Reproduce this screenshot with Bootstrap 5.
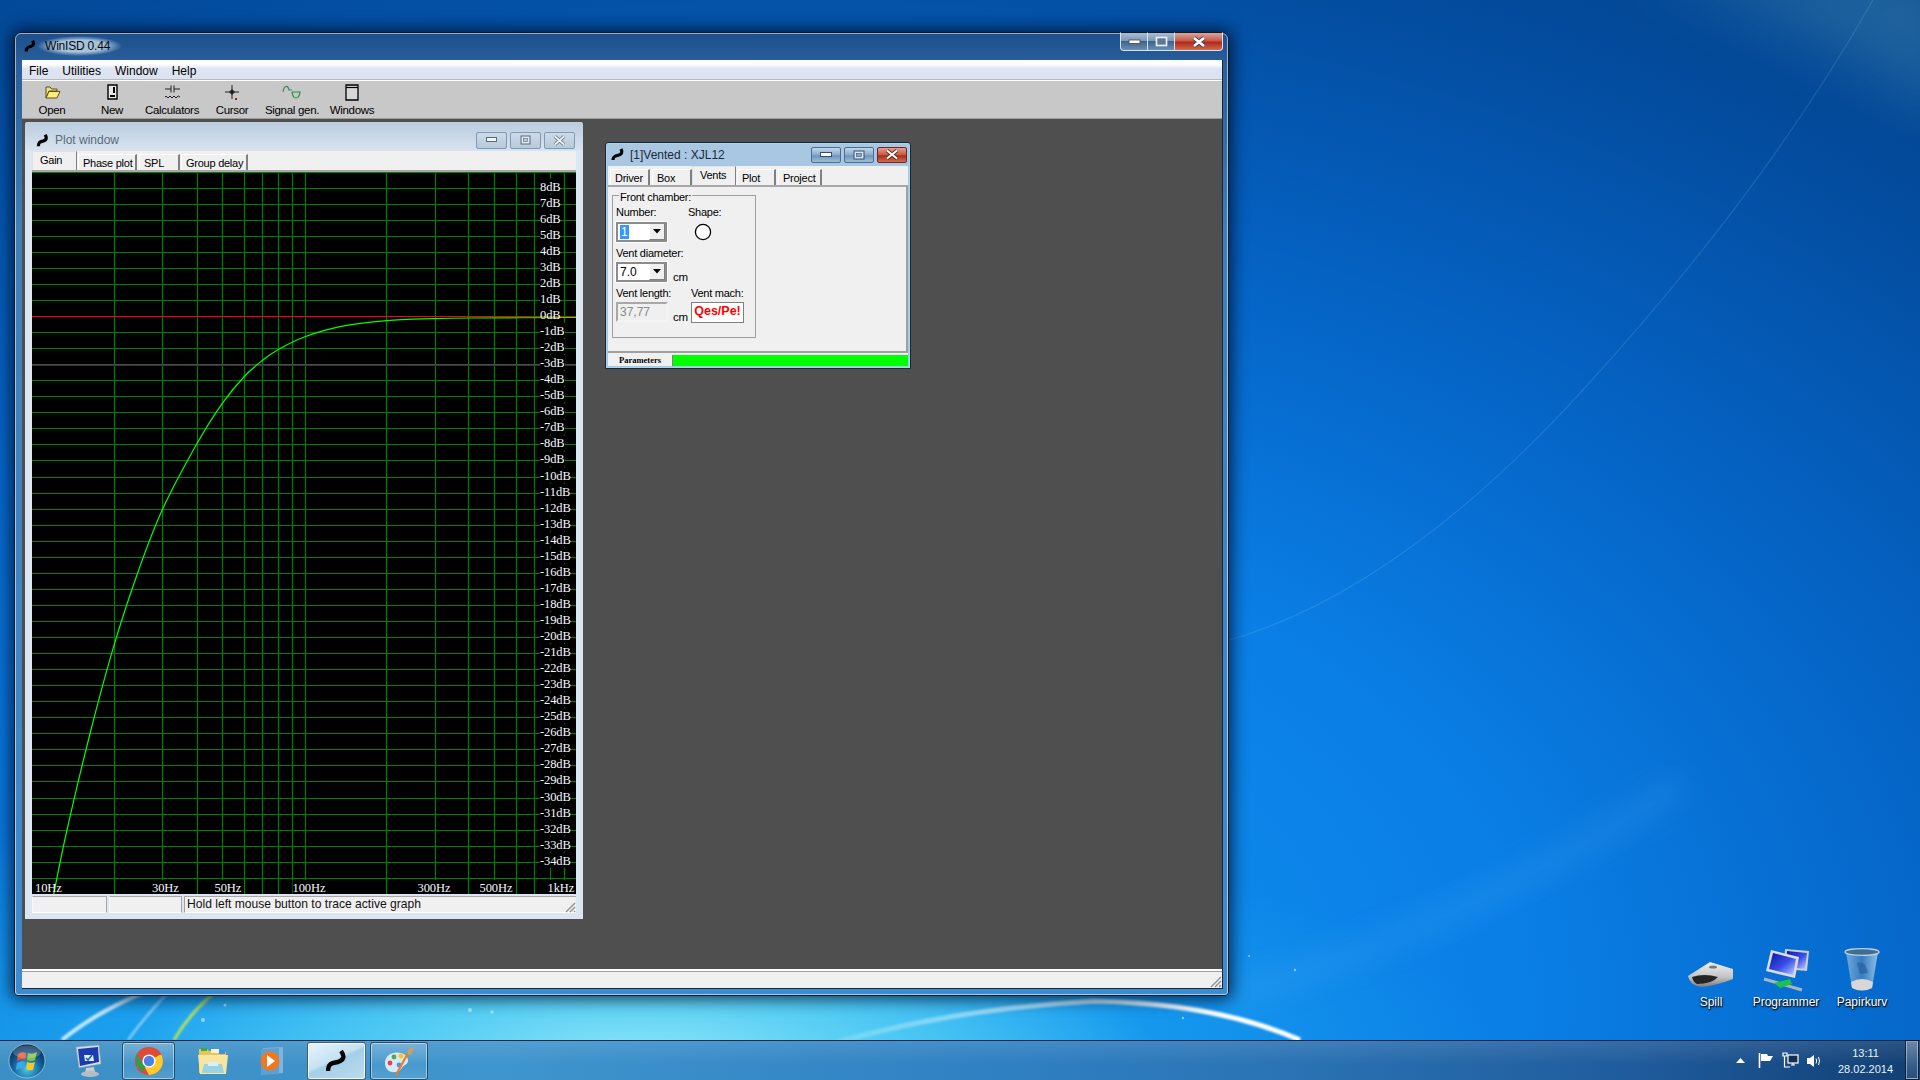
<!DOCTYPE html>
<html lang="en">
  <head>
    <meta charset="UTF-8" />
    <title>WinISD 0.44</title>
    <link rel="stylesheet" href="https://cdn.jsdelivr.net/npm/bootstrap@5.3.2/dist/css/bootstrap.min.css" />
    <style>
      html, body { margin: 0; height: 100%; overflow: hidden; }
      body {
        width: 1920px; height: 1080px; position: relative;
        font-family: "Liberation Sans", Arial, sans-serif; font-size: 12px; line-height: 14px; color: #000;
        background:
          radial-gradient(ellipse 520px 150px at 640px 1060px, #8fe6f8 0, #55cdf4 45%, rgba(60,190,240,0) 100%),
          radial-gradient(ellipse 1000px 260px at 500px 1060px, #25b3f2 0, rgba(30,170,240,0) 100%),
          radial-gradient(ellipse 1900px 1250px at 800px 1000px, #1193f0 0, #0a7fe6 38%, #0564c6 62%, #034a9b 88%, #04468f 100%);
      }
      .wallpaper { left: 0; top: 0; }

      /* main window */
      .win-main {
        left: 14px; top: 32px; width: 1215px; height: 964px; padding: 27px 5px 6px 7px;
        border: 1px solid #0c1a2a; border-radius: 7px 7px 4px 4px;
        outline: 1px solid rgba(255,255,255,.55); outline-offset: -2px;
        box-shadow: 0 0 16px 3px rgba(0,10,30,.75);
        background: linear-gradient(#1c4f8c 0, #2a5f9b 30px, #3f7fb8 200px, #3e8cd0 100%);
      }
      .main-title { left: 9px; top: 3px; height: 20px; }
      .main-title span { font-size: 12px; letter-spacing: -.2px; color: #06090c; padding: 3px 12px 3px 8px; margin-left: -8px; background: radial-gradient(ellipse closest-side, rgba(225,238,250,.7) 60%, rgba(225,238,250,0) 100%); }
      .caps-main { right: 5px; top: -1px; height: 19px; }
      .caps-main div { height: 19px; border: 1px solid #d8e2ec; border-top-color: #0c1a2a; display: flex; align-items: center; justify-content: center; }
      .caps-main .c-min { width: 28px; border-radius: 0 0 0 4px; background: linear-gradient(#a8bdd2, #7d99b6 45%, #3c6490 50%, #6c8fb2); }
      .caps-main .c-max { width: 27px; border-left: 0; background: linear-gradient(#a8bdd2, #7d99b6 45%, #3c6490 50%, #6c8fb2); }
      .caps-main .c-close { width: 48px; border-left: 0; border-radius: 0 0 4px 0; background: linear-gradient(#d9a79c, #c9594a 45%, #b02a18 55%, #d06a50); }
      .client { background: #4f4f4f; height: 100%; border: 1px solid #16283a; border-top: 0; border-left: 0; }
      .menu-bar { height: 20px; padding: 2px 0 0 7px; background: linear-gradient(#fff 0, #fbfcfe 25%, #dfe4f3 45%, #dde2f1 100%); border-bottom: 1px solid #b8b8c0; gap: 14px; }
      .menu-bar span { font-size: 12px; }
      .tool-bar { height: 39px; background: #c8c8c8; border-top: 1px solid #fff; border-bottom: 1px solid #9c9c9c; padding-left: 0; }
      .tool { width: 60px; padding-top: 3px; font-size: 11.5px; letter-spacing: -.3px; }
      .tool svg { height: 17px; width: 22px; display: block; }
      .tool span { margin-top: 2px; line-height: 14px; }
      .mdi { position: relative; flex: 1 1 auto; }
      .main-status { height: 19px; background: #f0f0f0; border-top: 1px solid #fff; box-shadow: inset 0 1px 0 #fff, inset 0 2px 0 #a0a0a0; position: relative; }
      .grip { right: 0; bottom: 0; }

      /* child windows */
      .win-plot { left: 3px; top: 3px; width: 558px; height: 797px; background: #dbe6f2; border-radius: 3px 3px 0 0; padding: 0 7px 7px; }
      .plot-title { height: 29px; margin: 0 -7px; padding: 7px 0 0 11px; background: linear-gradient(#b9cddf, #d8e3ef); border-radius: 3px 3px 0 0; }
      .plot-title .name { color: #5b6b7a; font-size: 12px; margin-left: 5px; }
      .cap { height: 17px; border: 1px solid #8299b3; border-radius: 2px; display: flex; align-items: center; justify-content: center; background: linear-gradient(#cddbe9, #b6c9dc); }
      .plot-caps { gap: 3px; margin-right: 8px; }
      .plot-caps .cap { width: 31px; }
      .page-tabs { background: #f0f0f0; height: 21px; border-bottom: 2px solid #a8a8a8; flex-wrap: nowrap; padding: 0; }
      .page-tabs .nav-link {
        border: 0; border-radius: 0; padding: 0 0 0 4px; height: 16px; margin-top: 3px; color: #000;
        font-size: 11px; letter-spacing: -.25px; line-height: 17px; text-align: left; white-space: nowrap;
        background: #f0f0f0; border-top: 1px solid #fff; border-left: 1px solid #fff; border-right: 2px solid #808080;
      }
      .page-tabs .nav-link.active { height: 19px; margin-top: 0; padding-left: 7px; line-height: 16px; border-right: 1px solid #808080; background: #f0f0f0; color: #000; }
      .plot-box { height: 722px; background: #000; display: block; }
      .plot-box text { font-family: "Liberation Serif", "Times New Roman", serif; font-size: 12.5px; fill: #f4f8ff; letter-spacing: -.1px; }
      .plot-status { height: 17px; margin-top: 2px; gap: 2px; position: relative; }
      .plot-status div { background: #f0f0f0; border-top: 1px solid #a8a8a8; border-left: 1px solid #f8f8f8; border-right: 1px solid #a8a8a8; border-bottom: 1px solid #fff; }
      .plot-status .p3 { flex: 1 1 auto; padding-left: 2px; border-left: 1px solid #a0a0a0; border-right: 0; line-height: 15px; font-size: 12.1px; color: #111; white-space: nowrap; }

      .win-vent { left: 583px; top: 23px; width: 306px; height: 227px; background: #a9c7e3; border: 1px solid #1a2836; border-radius: 3px 3px 0 0; padding: 0 2px 2px; box-shadow: inset 0 0 0 1px #9fd8ef; }
      .vent-title { height: 23px; margin: 0 -2px; padding-left: 4px; }
      .vent-title .name { font-size: 12px; margin-left: 3px; color: #1a2a3a; }
      .vent-caps { gap: 3px; margin-right: 3px; }
      .vent-caps .cap { height: 16px; width: 30px; border-color: #4a6d92; background: linear-gradient(#c3d6e8, #88aacb 50%, #6e95bc 55%, #a0bcd8); }
      .vent-caps .cap.shut { width: 30px; border-color: #6e2a20; background: linear-gradient(#e0a090, #c8553e 50%, #a92c18 55%, #cf6d55); }
      .vent-body { background: #f0f0f0; height: 200px; }
      .vent-tabs { padding-left: 2px; height: 21px; }
      .vent-page { height: 166px; border-right: 2px solid #a0a0a0; border-bottom: 2px solid #a0a0a0; padding: 8px 0 0 4px; }
      .group-box { width: 144px; height: 143px; border: 1px solid #a0a0a0; position: relative; padding: 9px 3px 0 3px; font-size: 11px; letter-spacing: -.25px; }
      .group-box .legend { top: -4px; left: 6px; background: #f0f0f0; padding: 0 1px; line-height: 11px; }
      .form-line { display: flex; height: 14px; margin-top: 4px; }
      .form-line.first { margin-top: 0; }
      .ctrl-line { display: flex; align-items: center; height: 20px; margin-top: 3px; }
      .ctrl-line.tight { margin-top: 2px; }
      .combo { width: 51px; height: 20px; background: #fff; border: 2px solid #8c8c8c; outline: 1px solid #fff; }
      .combo .val { flex: 1 1 auto; padding-left: 2px; font-size: 12px; line-height: 16px; letter-spacing: 0; }
      .combo .sel { background: #3399ff; color: #fff; padding: 0 1px; display: inline-block; height: 14px; line-height: 14px; margin-top: 1px; }
      .combo .arr { width: 16px; background: #f0f0f0; border-left: 1px solid #fff; border-right: 1px solid #808080; border-bottom: 1px solid #808080; display: flex; align-items: center; justify-content: center; }
      .unit { font-size: 11.5px; align-self: flex-end; margin-bottom: -2px; }
      .length-box { width: 52px; height: 20px; border: 2px solid #a8a8a8; border-bottom-color: #f4f4f4; border-right-color: #f4f4f4; background: #f0f0f0; color: #8a8a8a; font-size: 12px; line-height: 16px; padding-left: 2px; letter-spacing: 0; }
      .mach { width: 53px; height: 21px; background: #fff; border: 1px solid #808080; color: #ff0000; font-weight: 700; font-size: 12.5px; letter-spacing: 0; line-height: 17px; text-align: center; align-self: flex-start; }
      .vent-bottom { height: 11px; margin-top: 2px; }
      .vent-bottom .par { width: 65px; background: #f0f0f0; border-right: 1px solid #808080; font-family: "Liberation Serif", serif; font-weight: 700; font-size: 8.5px; line-height: 11px; text-align: center; }
      .vent-bottom .bar { background: #00ff00; }

      /* desktop icons */
      .desk { width: 84px; top: 945px; height: 66px; }
      .desk .pic { height: 47px; margin-bottom: 2px; }
      .desk .label { color: #fff; font-size: 12px; line-height: 16px; text-shadow: 0 1px 2px #000, 1px 1px 1px rgba(0,0,0,.8); }

      /* taskbar */
      .taskbar {
        left: 0; top: 1040px; width: 1920px; height: 40px; border-top: 1px solid #0e2a48;
        background:
          linear-gradient(rgba(255,255,255,.1), rgba(255,255,255,0) 60%),
          linear-gradient(90deg, #3c8fc4 0, #3f95cd 500px, #2f80c2 1000px, #2a72b3 1300px, #1f5b9c 1640px, #123f73 1920px);
      }
      .tb-slot { height: 39px; display: flex; align-items: center; justify-content: center; flex: none; }
      .tb-btn { height: 38px; border: 1px solid rgba(10,30,50,.65); border-radius: 3px; box-shadow: inset 0 0 0 1px rgba(255,255,255,.45); background: linear-gradient(rgba(255,255,255,.22), rgba(255,255,255,.05) 60%, rgba(255,255,255,.12)); margin-top: 1px; }
      .tb-btn.on { background: linear-gradient(155deg, #e8f4fb, #c6e2f2 45%, #a4cfe8 50%, #bcdcee); box-shadow: inset 0 0 0 1px rgba(255,255,255,.8); }
      .clock { width: 81px; color: #e9f0f6; font-size: 11px; line-height: 16px; text-align: center; }
      .show-desk { width: 12px; height: 38px; margin-right: 2px; border: 1px solid rgba(255,255,255,.4); outline: 1px solid rgba(0,0,0,.5); background: linear-gradient(rgba(255,255,255,.3), rgba(255,255,255,.08)); }
    </style>
  </head>
  <body>
    <svg class="wallpaper position-absolute" width="1920" height="1080" viewBox="0 0 1920 1080">
      <defs>
        <filter id="soft"><feGaussianBlur stdDeviation="1.1" /></filter>
        <filter id="wide"><feGaussianBlur stdDeviation="14" /></filter>
        <filter id="huge"><feGaussianBlur stdDeviation="30" /></filter>
        <linearGradient id="arcFade" x1="0" x2="1" y1="0" y2="0">
          <stop offset="0" stop-color="#fff" stop-opacity=".15" />
          <stop offset=".45" stop-color="#fff" stop-opacity=".6" />
          <stop offset=".8" stop-color="#fff" stop-opacity="1" />
        </linearGradient>
      </defs>
      <path d="M1650 -40L1960 -40L1960 120L1860 60Z" fill="#5a9ab5" fill-opacity=".32" filter="url(#huge)" />
      <path d="M1230 640 Q1400 590 1582 391 T1873 0" fill="none" stroke="#bfe0ff" stroke-opacity=".14" stroke-width="1.2" />
      <path d="M1230 995 Q1460 930 1680 785" fill="none" stroke="#6cc0ff" stroke-opacity=".2" stroke-width="16" filter="url(#wide)" />
      <path d="M837 1042 Q960 1008 1094 1001 Q1215 1003 1300 1040" fill="none" stroke="url(#arcFade)" stroke-width="5" filter="url(#soft)" />
      <path d="M62 1040 Q105 1005 175 980" fill="none" stroke="#e2f6ff" stroke-opacity=".85" stroke-width="4" filter="url(#soft)" />
      <path d="M128 1040 Q150 1010 180 980" fill="none" stroke="#d8f2ff" stroke-opacity=".55" stroke-width="2.5" filter="url(#soft)" />
      <path d="M174 1040 Q195 1005 225 985" fill="none" stroke="#c8e84a" stroke-opacity=".9" stroke-width="3" filter="url(#soft)" />
      <g fill="#fff" fill-opacity=".5">
        <circle cx="1295" cy="970" r="1.2" /><circle cx="1249" cy="956" r="1" /><circle cx="1183" cy="1018" r="1.2" />
        <circle cx="470" cy="1010" r="2" /><circle cx="492" cy="1012" r="1.5" />
        <circle cx="203" cy="1020" r="2" /><circle cx="225" cy="1005" r="1.5" />
      </g>
    </svg>

    <!-- main window -->
    <div class="win-main position-absolute">
      <div class="main-title position-absolute d-flex align-items-center gap-2">
        <svg width="13" height="14" viewBox="0 0 12 13"><path d="M2 11.5C2 7.5 4 7.5 6.5 6.8C9 6 9.5 4.5 8 1.5" fill="none" stroke="#000" stroke-width="3" /></svg>
        <span>WinISD 0.44</span>
      </div>
      <div class="caps-main position-absolute d-flex">
        <div class="c-min"><svg width="13" height="7" viewBox="0 0 13 7"><rect x="1" y="2" width="11" height="3.5" fill="#fff" stroke="#445" stroke-width=".8" /></svg></div>
        <div class="c-max"><svg width="13" height="12" viewBox="0 0 13 12"><rect x="1.5" y="1.5" width="10" height="8" fill="#5a7898" stroke="#e8eef4" stroke-width="1.7" /></svg></div>
        <div class="c-close"><svg width="16" height="12" viewBox="0 0 16 12"><path d="M3 2L13 10M13 2L3 10" stroke="#445" stroke-width="4.2" /><path d="M3 2L13 10M13 2L3 10" stroke="#fff" stroke-width="2.6" /></svg></div>
      </div>
      <div class="client d-flex flex-column">
        <div class="menu-bar d-flex align-items-center flex-none">
          <span>File</span><span>Utilities</span><span>Window</span><span>Help</span>
        </div>
        <div class="tool-bar d-flex">
          <div class="tool d-flex flex-column align-items-center">
            <svg viewBox="0 0 22 17"><path d="M5 3H9L10.5 5H16V7H8L5 14Z" fill="#f4e27a" stroke="#5a5020" /><path d="M5 14L8 7.5H19L16 14Z" fill="#fff07a" stroke="#5a5020" /></svg>
            <span>Open</span>
          </div>
          <div class="tool d-flex flex-column align-items-center">
            <svg viewBox="0 0 22 17"><path d="M7 1H16V15H7Z" fill="#e8e8e8" stroke="#000" stroke-width="1.4" /><path d="M12 3H14V9H12ZM9 11H14V13H9Z" fill="#000" /></svg>
            <span>New</span>
          </div>
          <div class="tool d-flex flex-column align-items-center">
            <svg viewBox="0 0 22 17"><path d="M4 5H10M10 1.5V8.5M13 1.5V8.5M13 5H19M4 13Q5 11 6 13T8 13T10 13T12 13T14 13T16 13T19 13" fill="none" stroke="#222" stroke-width="1" /></svg>
            <span>Calculators</span>
          </div>
          <div class="tool d-flex flex-column align-items-center">
            <svg viewBox="0 0 22 17"><path d="M11 1V15M4 8H18" stroke="#222" stroke-width="1" /><path d="M11 5L14 8L11 11L8 8Z" fill="#222" /><rect x="14" y="14" width="2" height="2" fill="#a02020" /></svg>
            <span>Cursor</span>
          </div>
          <div class="tool d-flex flex-column align-items-center">
            <svg viewBox="0 0 22 17"><path d="M2 8C3 1 7 1 8 6H11" fill="none" stroke="#3a8a5a" stroke-width="1.2" /><path d="M11 8H19C18 16 12 16 11 8" fill="none" stroke="#2a8a3a" stroke-width="1.2" /></svg>
            <span>Signal gen.</span>
          </div>
          <div class="tool d-flex flex-column align-items-center">
            <svg viewBox="0 0 22 17"><path d="M5 1H17V16H5Z" fill="#d8d8d8" stroke="#000" stroke-width="1.3" /><path d="M5 3.5H17" stroke="#000" stroke-width="1.2" /></svg>
            <span>Windows</span>
          </div>
        </div>

        <div class="mdi">
          <!-- plot window -->
          <div class="win-plot position-absolute">
            <div class="plot-title d-flex align-items-center">
              <svg width="14" height="15" viewBox="0 0 12 13"><path d="M2 11.5C2 7.5 4 7.5 6.5 6.8C9 6 9.5 4.5 8 1.5" fill="none" stroke="#000" stroke-width="2.8" /></svg>
              <span class="name">Plot window</span>
              <div class="plot-caps d-flex ms-auto">
                <div class="cap"><svg width="12" height="6" viewBox="0 0 12 6"><rect x=".5" y=".5" width="10" height="4" fill="#eef3f8" stroke="#5b6b7a" /></svg></div>
                <div class="cap"><svg width="11" height="10" viewBox="0 0 11 10"><rect x="1" y="1" width="9" height="8" fill="#dfe7f0" stroke="#5b6b7a" /><rect x="3.5" y="3.5" width="4" height="3" fill="#b6c9dc" stroke="#5b6b7a" stroke-width=".6" /></svg></div>
                <div class="cap"><svg width="13" height="11" viewBox="0 0 13 11"><path d="M2 1.5L11 9.5M11 1.5L2 9.5" stroke="#5b6b7a" stroke-width="3.4" /><path d="M2 1.5L11 9.5M11 1.5L2 9.5" stroke="#eef3f8" stroke-width="1.8" /></svg></div>
              </div>
            </div>
            <ul class="nav nav-tabs page-tabs">
              <li><a class="nav-link active d-block" style="width: 45px; margin-right: 1px">Gain</a></li>
              <li><a class="nav-link d-block" style="width: 59px; margin-right: 2px">Phase plot</a></li>
              <li><a class="nav-link d-block" style="width: 41px; margin-right: 1px">SPL</a></li>
              <li><a class="nav-link d-block" style="width: 67px">Group delay</a></li>
            </ul>
            <svg id="plot" class="plot-box" width="544" height="722" viewBox="32 172 544 722"></svg>
            <div class="plot-status d-flex">
              <div style="width: 75px"></div>
              <div style="width: 73px"></div>
              <div class="p3">Hold left mouse button to trace active graph</div>
              <svg class="grip position-absolute" width="12" height="12" viewBox="0 0 12 12"><path d="M11 2L2 11M11 6L6 11M11 10L10 11" stroke="#909090" stroke-width="1.4" /></svg>
            </div>
          </div>

          <!-- vented box window -->
          <div class="win-vent position-absolute">
            <div class="vent-title d-flex align-items-center">
              <svg width="17" height="15" viewBox="0 0 17 14"><path d="M3 12.5C3 8 6 8.5 9 7.5C12 6.5 12.5 4.5 11 1.5" fill="none" stroke="#000" stroke-width="3.2" /></svg>
              <span class="name">[1]Vented : XJL12</span>
              <div class="vent-caps d-flex ms-auto">
                <div class="cap"><svg width="12" height="6" viewBox="0 0 12 6"><rect x=".5" y=".5" width="11" height="4" fill="#fff" stroke="#34506c" /></svg></div>
                <div class="cap"><svg width="12" height="10" viewBox="0 0 12 10"><rect x="1" y="1" width="10" height="8" fill="#d8e4f0" stroke="#34506c" /><rect x="3.5" y="3.5" width="5" height="3" fill="#88aacb" stroke="#34506c" stroke-width=".6" /></svg></div>
                <div class="cap shut"><svg width="14" height="11" viewBox="0 0 14 11"><path d="M2 1.5L12 9.5M12 1.5L2 9.5" stroke="#5a2a20" stroke-width="3.6" /><path d="M2 1.5L12 9.5M12 1.5L2 9.5" stroke="#fff" stroke-width="2" /></svg></div>
              </div>
            </div>
            <div class="vent-body">
              <ul class="nav nav-tabs page-tabs vent-tabs">
                <li><a class="nav-link d-block" style="width: 40px; margin-right: 2px">Driver</a></li>
                <li><a class="nav-link d-block" style="width: 40px">Box</a></li>
                <li><a class="nav-link active d-block" style="width: 44px; margin-right: 1px">Vents</a></li>
                <li><a class="nav-link d-block" style="width: 39px; margin-right: 2px">Plot</a></li>
                <li><a class="nav-link d-block" style="width: 44px">Project</a></li>
              </ul>
              <div class="vent-page">
                <div class="group-box">
                  <span class="legend position-absolute">Front chamber:</span>
                  <div class="form-line first">
                    <span style="width: 72px">Number:</span><span>Shape:</span>
                  </div>
                  <div class="ctrl-line">
                    <div class="combo d-flex"><div class="val"><span class="sel">1</span></div><div class="arr"><svg width="8" height="5" viewBox="0 0 8 5"><path d="M0 0H8L4 4.5Z" /></svg></div></div>
                    <svg class="shape" width="18" height="18" viewBox="0 0 18 18" style="margin-left: 27px"><circle cx="9" cy="9" r="7.6" fill="#fff" stroke="#000" stroke-width="1.3" /></svg>
                  </div>
                  <div class="form-line">Vent diameter:</div>
                  <div class="ctrl-line tight">
                    <div class="combo d-flex"><div class="val">7.0</div><div class="arr"><svg width="8" height="5" viewBox="0 0 8 5"><path d="M0 0H8L4 4.5Z" /></svg></div></div>
                    <span class="unit" style="margin-left: 6px">cm</span>
                  </div>
                  <div class="form-line">
                    <span style="width: 75px">Vent length:</span><span>Vent mach:</span>
                  </div>
                  <div class="ctrl-line tight">
                    <div class="length-box">37,77</div>
                    <span class="unit" style="margin-left: 5px; width: 18px">cm</span>
                    <div class="mach">Qes/Pe!</div>
                  </div>
                </div>
              </div>
              <div class="vent-bottom d-flex">
                <div class="par">Parameters</div>
                <div class="bar flex-grow-1"></div>
              </div>
            </div>
          </div>
        </div>

        <div class="main-status">
          <svg class="grip position-absolute" width="13" height="13" viewBox="0 0 13 13"><path d="M12 2L2 12M12 6L6 12M12 10L10 12" stroke="#909090" stroke-width="1.4" /></svg>
        </div>
      </div>
    </div>

    <!-- desktop icons -->
    <div class="desk position-absolute d-flex flex-column align-items-center" style="left: 1669px">
      <div class="pic d-flex align-items-end pb-1">
        <svg width="46" height="26" viewBox="0 0 46 26">
          <defs><linearGradient id="drv" x1="0" x2="0" y1="0" y2="1"><stop offset="0" stop-color="#f0f0f0" /><stop offset=".6" stop-color="#c4c4c4" /><stop offset="1" stop-color="#7c7c7c" /></linearGradient></defs>
          <path d="M0 14L22 0L45 7V17Q30 23 14 25Q2 24 0 14Z" fill="url(#drv)" />
          <path d="M4 15Q16 11 30 15Q24 22 9 22Q5 20 4 15Z" fill="#242424" />
          <ellipse cx="25" cy="5" rx="4" ry="1.6" fill="#777" />
        </svg>
      </div>
      <span class="label">Spill</span>
    </div>
    <div class="desk position-absolute d-flex flex-column align-items-center" style="left: 1744px">
      <div class="pic d-flex align-items-end">
        <svg width="48" height="45" viewBox="0 0 48 45">
          <defs><linearGradient id="scr" x1="0" x2="1" y1="0" y2="1"><stop offset="0" stop-color="#0a14a8" /><stop offset=".55" stop-color="#3a50e8" /><stop offset="1" stop-color="#c0d0ff" /></linearGradient></defs>
          <path d="M23 2L47 4L45 24L22 22Z" fill="#c8d0d8" /><path d="M25 4L45 6L43 22L24 20Z" fill="url(#scr)" />
          <path d="M9 3L37 10L33 31L4 24Z" fill="#d8dde2" /><path d="M11 6L34 12L31 28L7 22Z" fill="url(#scr)" />
          <path d="M2 32L40 43" stroke="#a8b4bc" stroke-width="3" /><path d="M12 36L28 32L30 37L18 41Z" fill="#1cc04a" />
        </svg>
      </div>
      <span class="label">Programmer</span>
    </div>
    <div class="desk position-absolute d-flex flex-column align-items-center" style="left: 1820px">
      <div class="pic d-flex align-items-end">
        <svg width="36" height="45" viewBox="0 0 36 45">
          <defs><linearGradient id="bin" x1="0" x2="1" y1="0" y2="0"><stop offset="0" stop-color="#7fb4dc" /><stop offset=".5" stop-color="#3f7fc0" /><stop offset="1" stop-color="#a8cfe8" /></linearGradient></defs>
          <path d="M2 5L8 41Q18 46 28 41L34 5Z" fill="url(#bin)" fill-opacity=".85" />
          <path d="M7 35Q18 29 29 35L28 41Q18 46 8 41Z" fill="#d8d8d8" />
          <path d="M13 16Q20 14 22 20L24 26L16 27Z" fill="#2a5fa0" fill-opacity=".7" />
          <ellipse cx="18" cy="5" rx="17" ry="3.4" fill="#3a6f9a" stroke="#c8ccd0" stroke-width="1.4" />
        </svg>
      </div>
      <span class="label">Papirkurv</span>
    </div>

    <!-- taskbar -->
    <div class="taskbar position-absolute d-flex">
      <div class="tb-slot" style="width: 54px">
        <svg width="38" height="36" viewBox="0 0 38 36">
          <defs><radialGradient id="orb" cx=".5" cy=".75" r=".7"><stop offset="0" stop-color="#45c8e8" /><stop offset=".6" stop-color="#125a96" /><stop offset="1" stop-color="#0a2c50" /></radialGradient></defs>
          <ellipse cx="19" cy="18" rx="18" ry="17" fill="url(#orb)" stroke="#b8d4e4" stroke-opacity=".7" />
          <path d="M10 11Q14 8 18 10L17 17Q13 15 9 18Z" fill="#ee5530" /><path d="M20 10Q24 12 29 9L27 17Q23 19 19 17Z" fill="#82c43c" />
          <path d="M9 20Q13 17 17 19L16 26Q12 24 8 27Z" fill="#3aa8e8" /><path d="M19 19Q23 21 27 19L25 27Q21 28 18 26Z" fill="#f8c828" />
          <ellipse cx="19" cy="9" rx="14" ry="6.5" fill="#fff" fill-opacity=".2" />
        </svg>
      </div>
      <div class="tb-slot" style="width: 68px">
        <svg width="28" height="34" viewBox="0 0 28 34">
          <path d="M2 3L25 1L27 20L5 24Z" fill="#d8dde2" stroke="#8a98a4" stroke-width=".6" /><path d="M4 5L24 3L25 18L6 22Z" fill="#1a3cb0" />
          <path d="M10 11H19L20 17H11Z" fill="#dff0ff" /><path d="M12 14L14 16L18 11" fill="none" stroke="#1a5cc0" stroke-width="1.6" />
          <path d="M12 24L20 23L21 28L11 29Z" fill="#c8ccd0" /><ellipse cx="16" cy="30" rx="9" ry="3" fill="#b8bcc0" />
        </svg>
      </div>
      <div class="tb-btn tb-slot" style="width: 53px">
        <svg width="30" height="30" viewBox="0 0 30 30">
          <circle cx="15" cy="15" r="14" fill="#dd4b39" />
          <path d="M15 15L27.1 8A14 14 0 0 1 15 29L9 18Z" fill="#fdc92b" />
          <path d="M15 15L9 25.5A14 14 0 0 1 3 7.8L9 18Z" fill="#2ba14b" />
          <path d="M3 7.8L9 18L15 9H27.1A14 14 0 0 0 3 7.8Z" fill="#dd4b39" />
          <circle cx="15" cy="15" r="6.6" fill="#fff" /><circle cx="15" cy="15" r="5.2" fill="#4a80e8" />
        </svg>
      </div>
      <div class="tb-slot ms-1" style="width: 68px">
        <svg width="32" height="29" viewBox="0 0 32 29">
          <path d="M2 3H10L12 5H27Q29 5 29 7V27H2Z" fill="#e8c45a" /><path d="M4 2H10V5H4Z" fill="#30b040" /><path d="M14 3H22V7H14Z" fill="#f8f0d8" /><path d="M22 4H28V8H22Z" fill="#4090d8" />
          <path d="M1 9H31L29 28H3Z" fill="#f8e6a0" /><path d="M7 18H25L27 27H5Z" fill="#8fd0e8" fill-opacity=".9" /><path d="M11 16H21V20H11Z" fill="#d8f0f8" />
        </svg>
      </div>
      <div class="tb-slot" style="width: 52px">
        <svg width="28" height="30" viewBox="0 0 28 30">
          <path d="M4 2L24 1V27L4 28Z" fill="#7fb4dc" /><path d="M2 3L20 2V28L2 29Z" fill="#5fa0d0" />
          <circle cx="11" cy="15" r="9.5" fill="#f07820" /><path d="M8 9L16 15L8 21Z" fill="#fff" />
        </svg>
      </div>
      <div class="tb-btn on tb-slot" style="width: 59px; margin-left: 8px">
        <svg width="22" height="26" viewBox="0 0 22 24"><path d="M2 22C2 14 6 14 12 13C18 11 19 7 15 2" fill="none" stroke="#000" stroke-width="4.4" /></svg>
      </div>
      <div class="tb-btn tb-slot" style="width: 58px; margin-left: 4px">
        <svg width="32" height="32" viewBox="0 0 32 32">
          <path d="M2 18C2 10 10 6 18 8C26 10 27 18 22 20C18 22 19 26 13 27C6 28 2 24 2 18Z" fill="#d8e8f4" />
          <circle cx="7" cy="18" r="2.4" fill="#e84040" /><circle cx="11" cy="12" r="2.4" fill="#48b048" /><circle cx="18" cy="11" r="2.4" fill="#f8c820" /><circle cx="16" cy="20" r="2.4" fill="#4898d8" />
          <path d="M13 30L25 8" stroke="#e88020" stroke-width="2.2" /><path d="M24 9L27 2L31 3L28 10Z" fill="#c8a060" />
        </svg>
      </div>
      <div class="tb-slot ms-auto" style="width: 21px"><svg width="9" height="5" viewBox="0 0 9 5"><path d="M0 5L4.5 0L9 5Z" fill="#fff" /></svg></div>
      <div class="tb-slot" style="width: 25px; margin-left: 2px">
        <svg width="16" height="17" viewBox="0 0 16 17"><path d="M1.5 1V16" stroke="#fff" stroke-width="1.6" /><path d="M3 2H9L10 4H15L12 9H3Z" fill="#fff" /></svg>
      </div>
      <div class="tb-slot" style="width: 25px">
        <svg width="17" height="17" viewBox="0 0 17 17"><path d="M1 1H5V4H1ZM2.5 4V15H8" fill="none" stroke="#fff" stroke-width="1.2" /><rect x="6" y="3" width="10" height="8" fill="#10304e" stroke="#fff" stroke-width="1.2" /><path d="M9 13H13M11 11V13" stroke="#fff" stroke-width="1.2" /></svg>
      </div>
      <div class="tb-slot" style="width: 22px">
        <svg width="16" height="14" viewBox="0 0 16 14"><path d="M1 4H4L8 1V13L4 10H1Z" fill="#fff" /><path d="M10 4.5Q11.5 7 10 9.5M12.5 3Q14.5 7 12.5 11" fill="none" stroke="#fff" stroke-width="1" /></svg>
      </div>
      <div class="clock flex-none align-self-center">13:11<br />28.02.2014</div>
      <div class="show-desk flex-none"></div>
    </div>

    <script src="https://cdn.jsdelivr.net/npm/bootstrap@5.3.2/dist/js/bootstrap.bundle.min.js"></script>
    <script>
      // plot coordinates are page pixels, the viewBox of the svg shifts them
      const plot = document.getElementById("plot");
      const LEFT = 32, RIGHT = 576, TOP = 172, BOTTOM = 894;
      const freqX = [114, 162, 196.5, 222, 244, 262, 278, 292, 304.5, 386, 434.5, 468, 494, 516, 534, 550, 564];
      const dbY = (db) => 316 - db * 16.05;
      const snap = (v) => Math.round(v) + .5;
      let svg = "";

      svg += `<path d="M${LEFT} ${TOP + .5}H${RIGHT}" stroke="#008000" stroke-width="1.2" />`;
      for (let db = 8; db >= -35; db--) {
        svg += `<path d="M${LEFT} ${snap(dbY(db))}H${RIGHT}" stroke="#008000" stroke-width="1.2" />`;
      }
      freqX.forEach(x => {
        svg += `<path d="M${snap(x)} ${TOP}V${BOTTOM}" stroke="#008000" stroke-width="1.2" />`;
      });
      svg += `<path d="M${LEFT} 365.5H${RIGHT}" stroke="#800080" stroke-width="1" />`;

      // labels have a black box that hides the grid behind them
      let labels = "";
      for (let db = 8; db >= -34; db--) {
        const name = db + "dB";
        const width = db >= 0 ? 20 : db > -10 ? 25 : 30;
        svg += `<rect x="540" y="${dbY(db) - 9}" width="${width}" height="15" fill="#000" />`;
        labels += `<text x="540" y="${dbY(db) + 3}">${name}</text>`;
      }
      [["10Hz", 35, 26], ["30Hz", 152, 27], ["50Hz", 214.5, 27], ["100Hz", 292.5, 33], ["300Hz", 417.5, 33], ["500Hz", 479.5, 33], ["1kHz", 547.5, 27]].forEach(([name, x, width]) => {
        svg += `<rect x="${x}" y="880" width="${width}" height="14" fill="#000" />`;
        labels += `<text x="${x}" y="892">${name}</text>`;
      });

      svg += `<path d="M${LEFT} 316.5H${RIGHT}" stroke="#ff0000" stroke-width="1.2" />`;

      // response curve read off the reference, joined with catmull-rom segments
      const curve = [[53.7, 894], [67, 830], [90.3, 732.5], [114.3, 644.4], [138.7, 570], [162.3, 509.7], [196.3, 444.7],
        [222.3, 403.3], [244.3, 376.5], [262.3, 360.5], [278.3, 349.5], [304.3, 337], [340, 326.7], [386.7, 320.7], [433, 318.7], [471.7, 318], [576, 317.5]];
      let d = `M${curve[0].join(" ")}`;
      for (let i = 0; i < curve.length - 1; i++) {
        const p0 = curve[Math.max(i - 1, 0)], p1 = curve[i], p2 = curve[i + 1], p3 = curve[Math.min(i + 2, curve.length - 1)];
        d += `C${p1[0] + (p2[0] - p0[0]) / 6} ${p1[1] + (p2[1] - p0[1]) / 6} ${p2[0] - (p3[0] - p1[0]) / 6} ${p2[1] - (p3[1] - p1[1]) / 6} ${p2[0]} ${p2[1]}`;
      }
      svg += `<path d="${d}" fill="none" stroke="#00ff00" stroke-width="1.2" />`;
      plot.innerHTML = svg + labels;
    </script>
  </body>
</html>
